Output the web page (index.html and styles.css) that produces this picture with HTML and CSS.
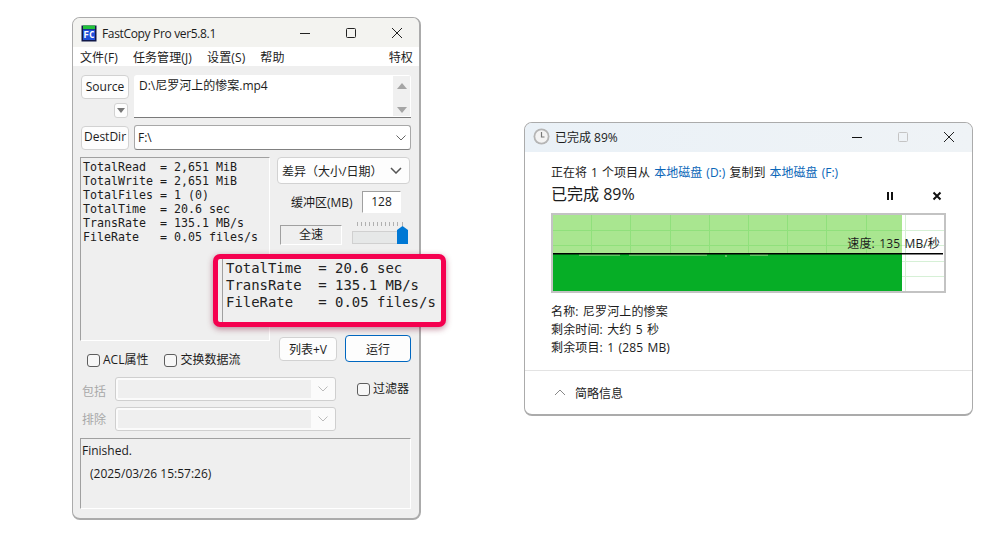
FILE: index.html
```html
<!DOCTYPE html>
<html lang="zh">
<head>
<meta charset="utf-8">
<title>FastCopy</title>
<link rel="stylesheet" href="styles.css">
</head>
<body>
<div class="desktop">
  <section class="win fc">
    <header class="fc-title">
      <svg class="fc-icon" width="16" height="17" viewBox="0 0 16 17"><rect x="0.5" y="0.5" width="15" height="16" fill="#101848"/><rect x="2" y="0.5" width="12" height="3.5" fill="#22c23a"/><rect x="2" y="4.5" width="12" height="10.500" fill="#2050d8"/><text x="8" y="13" class="fc-icon-text" text-anchor="middle">FC</text></svg>
      <span class="fc-name">FastCopy Pro ver5.8.1</span>
      <div class="caps">
        <svg width="12" height="12" viewBox="0 0 12 12"><path d="M1 6.500h10" stroke="#222" fill="none"/></svg>
        <svg width="12" height="12" viewBox="0 0 12 12"><rect x="1.500" y="1.500" width="9" height="9" rx="1" stroke="#222" fill="none"/></svg>
        <svg width="12" height="12" viewBox="0 0 12 12"><path d="M1 1l10 10M11 1L1 11" stroke="#222" fill="none"/></svg>
      </div>
    </header>
    <nav class="menu">
      <span>文件(F)</span><span>任务管理(J)</span><span>设置(S)</span><span>帮助</span><span class="menu-end">特权</span>
    </nav>
    <div class="fc-body">
      <div class="row-src">
        <div class="src-btns">
          <button class="btn btn-src">Source</button>
          <span class="mini"><svg width="8" height="5" viewBox="0 0 8 5"><path d="M0 0h8L4 5z" fill="#777"/></svg></span>
        </div>
        <div class="src-text">
          <span class="src-val">D:\尼罗河上的惨案.mp4</span>
          <div class="scroll">
            <svg width="10" height="6" viewBox="0 0 10 6"><path d="M5 0l5 6H0z" fill="#a5a5a5"/></svg>
            <svg width="10" height="6" viewBox="0 0 10 6"><path d="M0 0h10L5 6z" fill="#a5a5a5"/></svg>
          </div>
        </div>
      </div>
      <div class="row-dst">
        <button class="btn btn-src">DestDir</button>
        <div class="dst-input"><span>F:\</span><svg class="chev" width="10" height="6" viewBox="0 0 10 6"><path d="M.5.5L5 5 9.500.5" stroke="#666" fill="none"/></svg></div>
      </div>
      <div class="mid">
        <div class="mid-left">
          <pre class="stats">TotalRead  = 2,651 MiB
TotalWrite = 2,651 MiB
TotalFiles = 1 (0)
TotalTime  = 20.6 sec
TransRate  = 135.1 MB/s
FileRate   = 0.05 files/s</pre>
          <div class="checks">
            <label class="chk"><i class="box"></i>ACL属性</label>
            <label class="chk"><i class="box"></i>交换数据流</label>
          </div>
        </div>
        <div class="mid-right">
          <div class="mode"><span>差异（大小/日期）</span><svg width="12" height="7" viewBox="0 0 12 7"><path d="M1 1l5 5 5-5" stroke="#555" stroke-width="1.5" fill="none"/></svg></div>
          <div class="buf"><span>缓冲区(MB)</span><span class="buf-val">128</span></div>
          <div class="speed">
            <span class="full">全速</span>
            <svg class="slider" width="58" height="24" viewBox="0 0 58 24"><path d="M5.500 1v4M9.500 1v4M13.500 1v4M17.500 1v4M21.500 1v4M25.500 1v4M29.500 1v4M33.500 1v4M37.500 1v4M41.500 1v4M45.500 1v4M50.500 1v4" stroke="#b0b0b0" fill="none"/><rect x="0.500" y="10.500" width="55" height="12" fill="#e6e8e8" stroke="#d0d0d0"/><path d="M45 9l5.500-4 5.500 4v14H45z" fill="#0078d4"/></svg>
          </div>
          <div class="actions">
            <button class="btn btn-list">列表+V</button>
            <button class="btn btn-run">运行</button>
          </div>
        </div>
      </div>
      <div class="filters">
        <div class="filter-rows">
          <div class="filter-row"><span class="flabel flabel-low">包括</span><div class="combo"><span class="combo-in"></span><svg width="10" height="6" viewBox="0 0 10 6"><path d="M.5.5L5 5 9.500.5" stroke="#bbb" fill="none"/></svg></div></div>
          <div class="filter-row"><span class="flabel">排除</span><div class="combo"><span class="combo-in"></span><svg width="10" height="6" viewBox="0 0 10 6"><path d="M.5.5L5 5 9.500.5" stroke="#bbb" fill="none"/></svg></div></div>
        </div>
        <label class="chk chk-filter"><i class="box"></i>过滤器</label>
      </div>
      <div class="log">
        <p class="log-a">Finished.</p>
        <p class="log-b">(2025/03/26 15:57:26)</p>
      </div>
    </div>
  </section>

  <div class="callout"><pre class="callout-text">TotalTime  = 20.6 sec
TransRate  = 135.1 MB/s
FileRate   = 0.05 files/s</pre></div>

  <section class="win cp">
    <header class="cp-title">
      <svg width="17" height="17" viewBox="0 0 17 17"><circle cx="8.500" cy="8.500" r="8" fill="#b5b5b5"/><circle cx="8.500" cy="8.500" r="6.200" fill="#f3f3f3"/><path d="M8.500 4v5h3" stroke="#777" stroke-width="1.200" fill="none"/></svg>
      <span class="cp-name">已完成 89%</span>
      <div class="cp-caps">
        <svg width="12" height="12" viewBox="0 0 12 12"><path d="M1 6.500h10" stroke="#111" fill="none"/></svg>
        <svg width="12" height="12" viewBox="0 0 12 12"><rect x="1.500" y="1.500" width="9" height="9" rx="1" stroke="#c4c4c4" fill="none"/></svg>
        <svg width="12" height="12" viewBox="0 0 12 12"><path d="M1 1l10 10M11 1L1 11" stroke="#222" fill="none"/></svg>
      </div>
    </header>
    <div class="cp-body">
      <p class="cp-line">正在将 1 个项目从 <span class="link">本地磁盘 (D:)</span> 复制到 <span class="link">本地磁盘 (F:)</span></p>
      <div class="cp-head">
        <h1>已完成 89%</h1>
        <div class="cp-ctl">
          <svg width="10" height="10" viewBox="0 0 10 10"><path d="M2 1h2v8H2zM6 1h2v8H6z" fill="#111"/></svg>
          <svg width="10" height="10" viewBox="0 0 10 10"><path d="M1.500 1.500l7 7M8.500 1.500l-7 7" stroke="#111" stroke-width="2" fill="none"/></svg>
        </div>
      </div>
      <div class="graph">
        <svg width="391" height="76" viewBox="0 0 391 76">
          <rect width="391" height="76" fill="#fff"/>
          <path d="M349 15.500h42M349 30.500h42M349 46.500h42M349 61.500h42M352.500 0v76" stroke="#d6f0d6" fill="none"/>
          <rect width="349" height="76" fill="#a9e690"/>
          <path d="M0 15.500h349M0 30.500h349M38.500 0v39M77.500 0v39M117.500 0v39M156.500 0v39M195.500 0v39M234.500 0v39M273.500 0v39M313.500 0v39" stroke="#90e07c" fill="none"/>
          <rect y="39" width="349" height="37" fill="#06ae26"/>
          <path d="M26 40h41M76 40h78M197 40h18" stroke="#b6dc9c" fill="none"/>
          <path d="M172 41h2" stroke="#b6dc9c" fill="none"/>
          <rect y="38" width="390" height="1.500" fill="#000"/>
        </svg>
        <span class="speed-label">速度: 135 MB/秒</span>
      </div>
      <div class="details">
        <p>名称: 尼罗河上的惨案</p>
        <p>剩余时间: 大约 5 秒</p>
        <p>剩余项目: 1 (285 MB)</p>
      </div>
    </div>
    <footer class="cp-foot">
      <svg width="12" height="7" viewBox="0 0 12 7"><path d="M1 6l5-5 5 5" stroke="#888" fill="none"/></svg>
      <span>简略信息</span>
    </footer>
  </section>
</div>
</body>
</html>
```
FILE: styles.css
```css
* { box-sizing: border-box; }
html, body { margin: 0; padding: 0; background: #fff; }
body { font-family: "Open Sans", "Noto Sans CJK SC", sans-serif; font-size: 12px; color: #1c1c1c; }
p, h1, pre { margin: 0; }
.desktop { position: relative; width: 1000px; height: 540px; overflow: hidden; }
.win { position: absolute; display: flex; flex-direction: column; overflow: hidden; border: 1px solid #ababab; border-radius: 8px; }
button { font: inherit; color: inherit; padding: 0; }

/* FastCopy window */
.fc { left: 72px; top: 17px; width: 349px; height: 503px; background: #efefef; border-width: 1px 2px 2px 1px; }
.fc-title { display: flex; align-items: center; height: 29px; background: #f3f3f0; padding: 1px 16px 0 8px; flex: none; }
.fc-icon-text { font: bold 9px "DejaVu Sans Mono", monospace; fill: #fff; }
.fc-name { margin-left: 5px; font-size: 12px; letter-spacing: -.34px; }
.caps { margin-left: auto; display: flex; gap: 34px; align-items: center; }
.menu { display: flex; height: 19px; background: #fff; align-items: center; padding: 0 6px 0 7px; gap: 15px; flex: none; letter-spacing: .12px; }
.menu-end { margin-left: auto; }
.fc-body { display: flex; flex-direction: column; padding: 9px 8px 0 7px; flex: 1; }
.btn { background: #fdfdfd; border: 1px solid #d2d2d2; border-radius: 4px; }
.btn-src { width: 48px; height: 24px; margin-left: 1px; padding-bottom: 2px; flex: none; }
.row-src { display: flex; gap: 5px; height: 43px; }
.src-btns { display: flex; flex-direction: column; align-items: flex-end; width: 49px; flex: none; }
.mini { display: flex; width: 14px; height: 15px; margin: 4px 1px 0 0; align-items: center; justify-content: center; background: #fdfdfd; border: 1px solid #d2d2d2; border-radius: 3px; }
.src-text { flex: 1; display: flex; background: #fff; border-bottom: 1px solid #7a7a7a; border-radius: 3px 3px 0 0; padding-left: 5px; }
.src-val { flex: 1; line-height: 18px; margin-top: 2px; }
.scroll { width: 17px; margin: 1px 1px 1px 0; background: #f0f0f0; display: flex; flex-direction: column; justify-content: space-between; align-items: center; padding: 7px 0 3px; }
.row-dst { display: flex; gap: 5px; margin-top: 7px; height: 25px; align-items: center; }
.dst-input { flex: 1; height: 25px; background: #fff; border: 1px solid #a8a8a8; border-bottom-color: #808080; border-radius: 3px; display: flex; align-items: center; justify-content: space-between; padding: 0 4px 0 3px; }
.mid { display: grid; grid-template-columns: 190px 134px; gap: 7px; margin-top: 7px; height: 212px; }
.mid-left { display: flex; flex-direction: column; }
.stats { height: 184px; padding: 2px 0 0 2px; font: 11.63px/14px "DejaVu Sans Mono", monospace; background: #efefef; border: 1px solid; border-color: #a0a0a0 #fff #fff #a0a0a0; }
.checks { display: flex; gap: 16px; margin: 10px 0 0 7px; }
.chk { display: inline-flex; align-items: center; gap: 3px; line-height: 18px; }
.box { width: 13px; height: 13px; border: 1px solid #5d5d5d; border-radius: 3px; background: #f7f7f7; flex: none; }
.mid-right { display: flex; flex-direction: column; }
.mode { display: flex; align-items: center; justify-content: space-between; width: 133px; height: 27px; background: #fdfdfd; border: 1px solid #d2d2d2; border-radius: 4px; padding: 0 7px 0 4px; }
.buf { display: flex; align-items: center; justify-content: space-between; margin: 7px 10px 0 14px; height: 22px; }
.buf-val { width: 39px; height: 22px; background: #fff; border: 1px solid #a8a8a8; border-color: #a0a0a0 #fff #fff #a0a0a0; text-align: center; line-height: 19px; }
.speed { display: flex; justify-content: space-between; align-items: flex-start; margin: 8px 0 0 3px; height: 24px; padding-right: 1px; }
.full { width: 62px; height: 20px; margin-top: 4px; text-align: center; line-height: 18px; border: 1px solid; border-color: #a0a0a0 #fff #fff #a0a0a0; }
.actions { margin-top: auto; display: flex; align-items: flex-end; gap: 8px; padding: 0 0 7px 2px; }
.btn-list { width: 58px; height: 24px; margin-bottom: 1px; }
.btn-run { width: 66px; height: 27px; border: 1px solid #0067c0; }
.filters { display: flex; margin-top: 8px; }
.filter-rows { display: flex; flex-direction: column; gap: 6px; }
.filter-row { display: flex; align-items: center; gap: 9px; height: 24px; }
.flabel { margin-left: 2px; color: #a8a8a8; width: 24px; }
.flabel-low { padding-top: 4px; }
.combo { width: 221px; height: 24px; background: #fbfbfb; border: 1px solid #cfcfcf; border-radius: 3px; display: flex; align-items: center; padding: 2px 7px 2px 2px; gap: 7px; }
.combo-in { flex: 1; align-self: stretch; background: #efefef; }
.chk-filter { margin: 3px 0 0 21px; align-self: flex-start; height: 18px; }
.log { margin-top: 7px; height: 71px; border: 1px solid; border-color: #a0a0a0 #fff #fff #a0a0a0; padding: 3px 0 0 1px; }
.log-a { line-height: 17px; }
.log-b { line-height: 17px; margin: 6px 0 0 8px; }

/* Callout */
.callout { position: absolute; left: 213px; top: 254px; width: 233px; height: 73px; padding-left: 4px; background: #efefef; border: 5px solid #f5004f; border-radius: 7px; box-shadow: 0 2px 6px rgba(120, 0, 40, .45); }
.callout-text { height: 100%; padding: 1px 0 0 3px; border-left: 1px solid #a0a0a0; font: 13.95px/17px "DejaVu Sans Mono", monospace; color: #222; }

/* Copy window */
.cp { left: 524px; top: 122px; width: 449px; height: 294px; background: #fff; border-width: 1px 1px 2px 1px; }
.cp-title { display: flex; align-items: center; height: 29px; padding: 0 17px 2px 8px; background: linear-gradient(90deg, #eaf1f7, #eff3f6); flex: none; }
.cp-name { margin-left: 5px; font-size: 12px; }
.cp-caps { margin-left: auto; display: flex; gap: 34px; }
.cp-body { padding: 12px 26px 0 26px; flex: 1; word-spacing: 1px; }
.cp-line { line-height: 17px; }
.link { color: #0a66b8; }
.cp-head { display: flex; align-items: center; justify-content: space-between; height: 24px; }
.cp-head h1 { font-size: 16px; font-weight: 400; word-spacing: 0; }
.cp-ctl { display: flex; gap: 37px; padding: 6px 4px 0 0; }
.graph { position: relative; width: 395px; height: 80px; margin-top: 8px; border: 2px solid #c3c3c3; line-height: 0; }
.speed-label { position: absolute; right: 4px; top: 20px; line-height: 17px; letter-spacing: .15px; }
.details { margin-top: 10px; letter-spacing: .15px; }
.details p { line-height: 18px; }
.cp-foot { display: flex; align-items: center; gap: 9px; height: 44px; padding-left: 29px; border-top: 1px solid #e3e3e3; flex: none; }
```
